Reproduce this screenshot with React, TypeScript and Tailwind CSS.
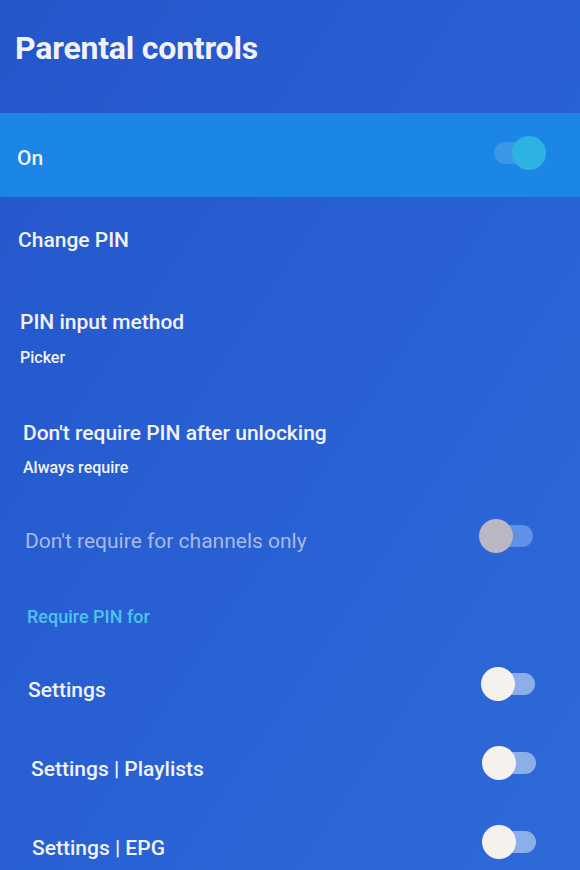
import React from 'react';

type ToggleProps = { on?: boolean; dim?: boolean };

const Toggle: React.FC<ToggleProps> = ({ on = false, dim = false }) => {
  const track = on ? 'bg-[#3a97e8]' : dim ? 'bg-[#5f91e8]' : 'bg-[#8eaeea]';
  const thumb = on ? 'bg-[#2db3e3] right-0' : dim ? 'bg-[#bab6c4] left-0' : 'bg-[#f5f2ee] left-0';
  return (
    <div className="relative w-[56px] h-[34px] shrink-0">
      <div className={`absolute left-[4px] right-[2px] top-[6px] h-[22px] rounded-full ${track}`} />
      <div className={`absolute top-0 w-[34px] h-[34px] rounded-full ${thumb}`} />
    </div>
  );
};

export default function App() {
  return (
    <div
      className="w-[580px] h-[870px] overflow-hidden bg-gradient-to-br from-[#2456ca] via-[#2860d4] to-[#2e6ad8] text-[#f2f2f6]"
      style={{ fontFamily: 'Roboto, "Noto Sans", sans-serif' }}
    >
      {/* header */}
      <div className="h-[113px] pl-[15px] pt-[29px]">
        <h1 className="text-[32px] leading-[38px] font-bold tracking-[-0.2px]">Parental controls</h1>
      </div>

      {/* focused row */}
      <div className="h-[84px] bg-[#1b86e6] flex items-center justify-between pl-[17px] pr-[34px]">
        <span className="text-[21px] font-medium pt-[8px]">On</span>
        <div className="-mt-[4px]">
          <Toggle on />
        </div>
      </div>

      <div className="h-[88px] flex items-center pl-[18px]">
        <span className="text-[21px] font-medium">Change PIN</span>
      </div>

      <div className="h-[110px] pl-[20px] pt-[24px]">
        <div className="text-[21px] leading-[26px] font-medium">PIN input method</div>
        <div className="text-[16px] leading-[22px] font-medium mt-[12px]">Picker</div>
      </div>

      <div className="h-[110px] pl-[23px] pt-[25px]">
        <div className="text-[21px] leading-[26px] font-medium">Don't require PIN after unlocking</div>
        <div className="text-[16px] leading-[22px] font-medium mt-[11px]">Always require</div>
      </div>

      <div className="h-[68px] flex items-center justify-between pl-[25px] pr-[45px]">
        <span className="text-[21px] text-[#aab9e4] pt-[5px]">Don't require for channels only</span>
        <div className="-mt-[6px]">
          <Toggle dim />
        </div>
      </div>

      <div className="h-[75px] flex items-center pl-[27px] pt-[12px]">
        <span className="text-[18px] font-medium text-[#4fc2ec]">Require PIN for</span>
      </div>

      {[
        { label: 'Settings', pl: 'pl-[28px]', pr: 'pr-[43px]' },
        { label: 'Settings | Playlists', pl: 'pl-[31px]', pr: 'pr-[42px]' },
        { label: 'Settings | EPG', pl: 'pl-[32px]', pr: 'pr-[42px]' },
      ].map(row => (
        <div key={row.label} className={`h-[79px] flex items-center justify-between ${row.pl} ${row.pr}`}>
          <span className="text-[21px] font-medium pt-[6px]">{row.label}</span>
          <div className="-mt-[8px]">
            <Toggle />
          </div>
        </div>
      ))}
    </div>
  );
}
